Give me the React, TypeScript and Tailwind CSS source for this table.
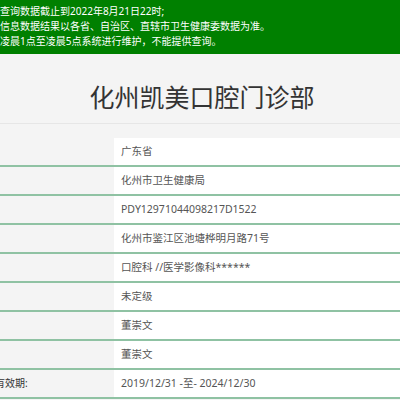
const rows: { label: string; value: string }[] = [
  { label: "", value: "广东省" },
  { label: "", value: "化州市卫生健康局" },
  { label: "", value: "PDY12971044098217D1522" },
  { label: "", value: "化州市鉴江区池塘桦明月路71号" },
  { label: "", value: "口腔科 //医学影像科******" },
  { label: "", value: "未定级" },
  { label: "", value: "董崇文" },
  { label: "", value: "董崇文" },
  { label: "有效期:", value: "2019/12/31 -至- 2024/12/30" },
];

export default function App() {
  return (
    <div
      className="w-[400px] h-[400px] overflow-hidden bg-[#f4f4f4]"
      style={{ fontFamily: '"Noto Sans", "Noto Sans CJK SC", sans-serif' }}
    >
      {/* 提示栏 */}
      <div className="h-[54px] bg-[#008000] pt-[4px] text-[10px] leading-[15px] text-white whitespace-nowrap">
        <p>查询数据截止到2022年8月21日22时;</p>
        <p>信息数据结果以各省、自治区、直辖市卫生健康委数据为准。</p>
        <p>凌晨1点至凌晨5点系统进行维护，不能提供查询。</p>
      </div>

      {/* 标题 */}
      <div className="pt-[31px] pb-[13px] border-b border-[#e6e6e6]">
        <h1 className="text-center text-[25px] leading-[25px] text-[#333] pl-[4px]">化州凯美口腔门诊部</h1>
      </div>

      {/* 信息表 */}
      <div className="mt-[14px]">
        {rows.map((r, i) => (
          <div key={i} className="flex h-[29px] border-b-2 border-[#8fc2a3]">
            <div className="w-[114px] shrink-0 flex items-center text-[10px] text-[#333] whitespace-nowrap">
              <span className="-ml-[5px]">{r.label}</span>
            </div>
            <div className="flex-1 bg-white flex items-center pl-[7px] text-[10.5px] text-[#555] whitespace-nowrap">
              {r.value}
            </div>
          </div>
        ))}
      </div>
    </div>
  );
}
